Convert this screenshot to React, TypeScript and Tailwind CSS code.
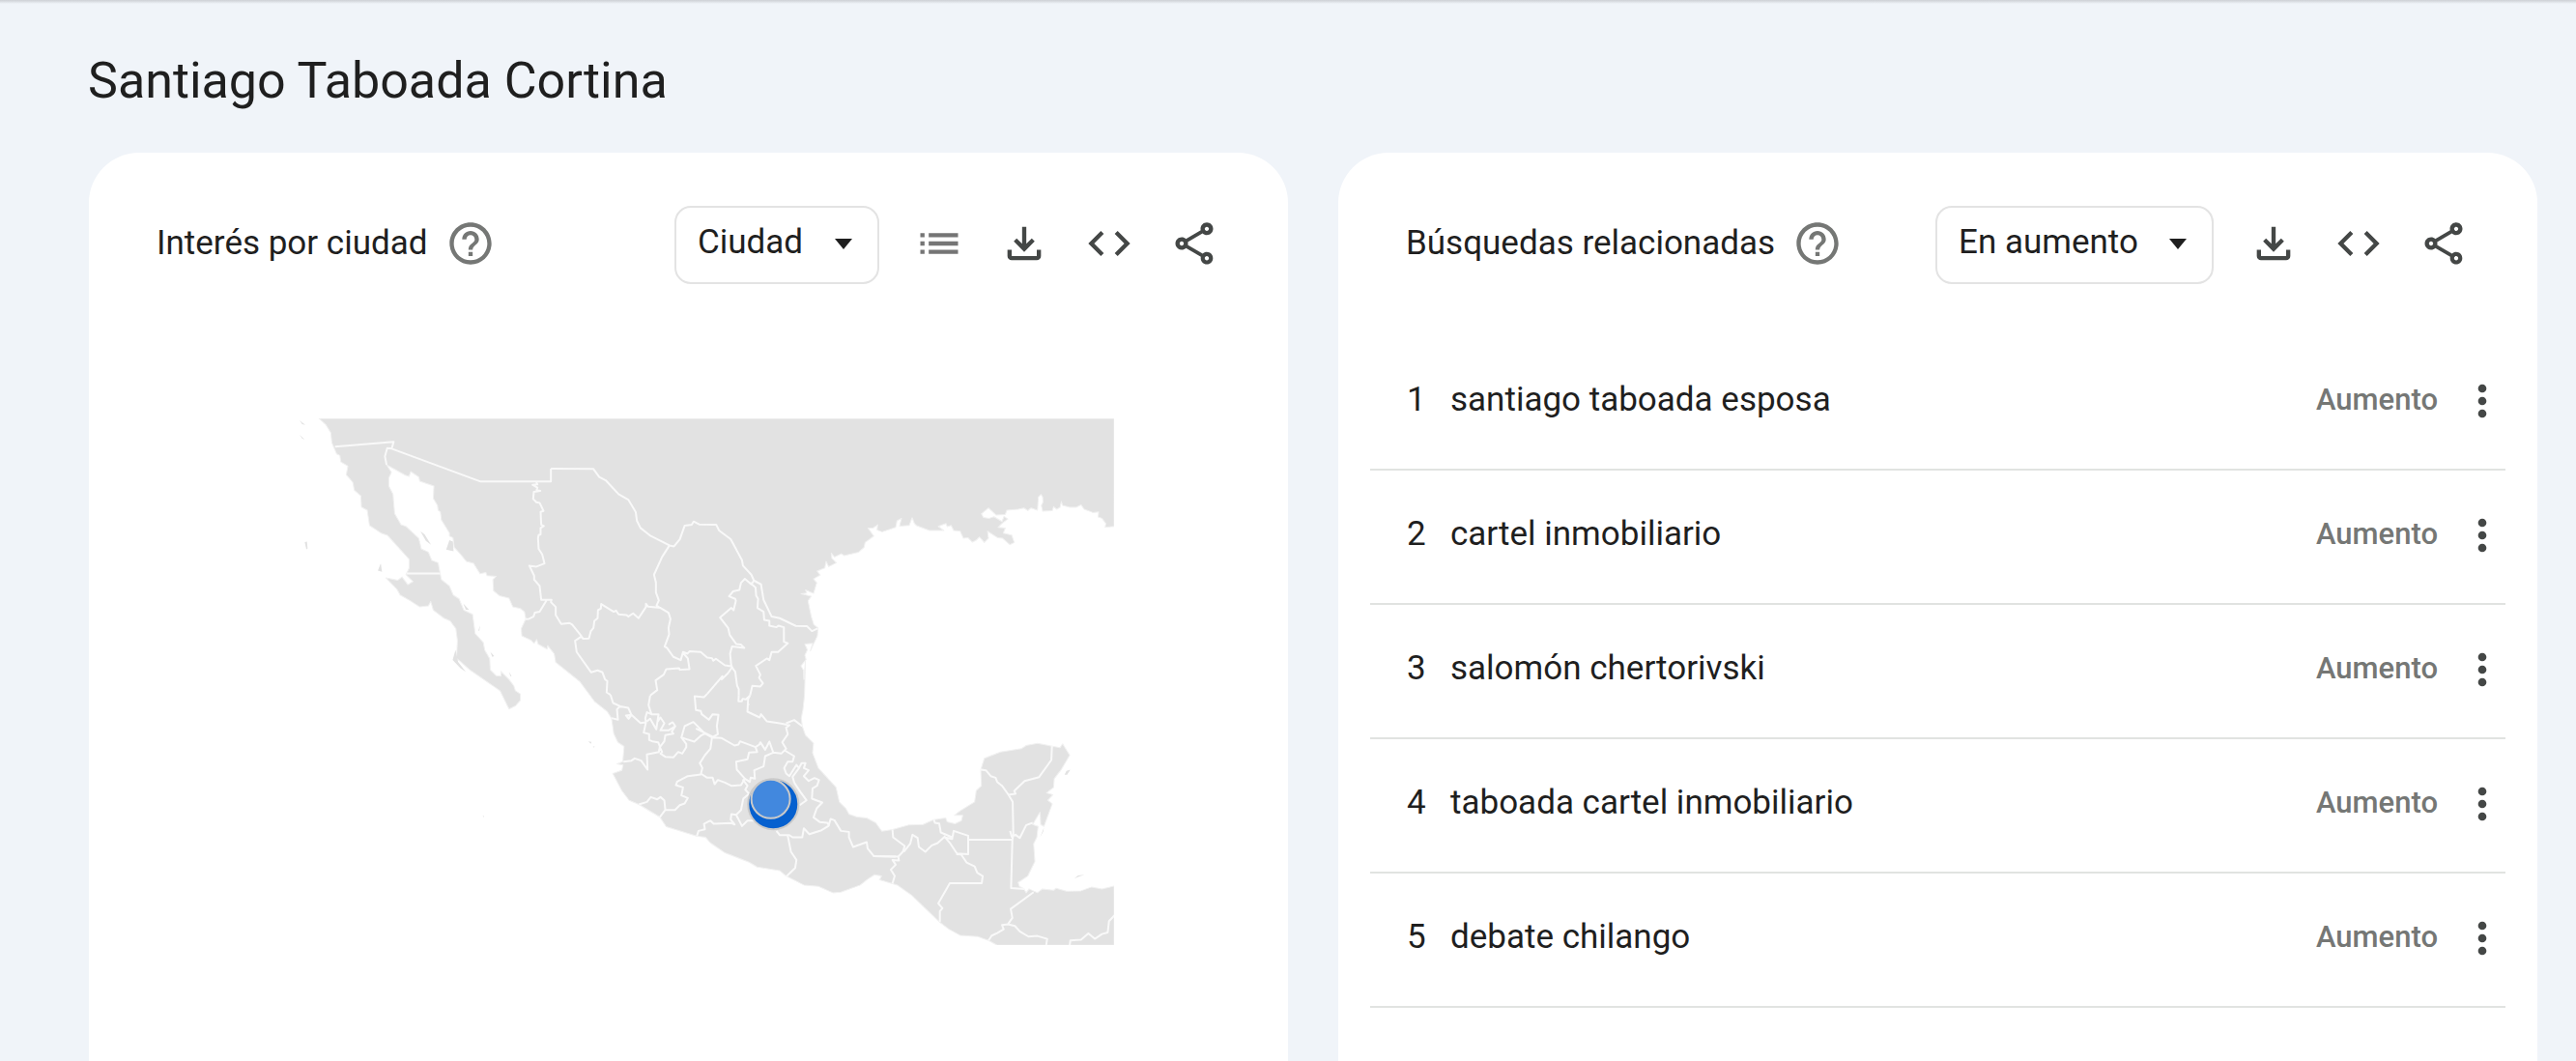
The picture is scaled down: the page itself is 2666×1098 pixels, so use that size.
import React from 'react';
import type { ReactNode } from 'react';
import { MdCode, MdHelpOutline, MdList, MdMoreVert, MdOutlineShare } from 'react-icons/md';

const LAND =
  'M90,40 L2558,40 L2558,375 L2530,378 L2532,366 L2520,350 L2508,346 L2510,330 L2492,332 L2465,322 L2455,308 L2440,316 L2420,316 L2398,310 L2394,298 L2390,316 L2380,322 L2370,314 L2366,326 L2336,328 L2332,310 L2337,300 L2336,284 L2331,276 L2323,284 L2320,325 L2300,318 L2290,326 L2278,318 L2260,322 L2225,325 L2220,338 L2192,340 L2168,318 L2146,336 L2152,347 L2170,350 L2185,345 L2210,360 L2216,344 L2228,352 L2210,366 L2198,378 L2220,380 L2214,396 L2240,402 L2248,425 L2234,432 L2212,412 L2196,410 L2165,390 L2168,412 L2155,425 L2140,408 L2130,418 L2118,424 L2104,410 L2090,412 L2080,390 L2060,388 L2052,372 L2040,376 L2036,366 L2012,375 L2030,388 L1985,388 L1945,373 L1938,366 L1931,348 L1922,372 L1892,374 L1898,350 L1884,358 L1880,378 L1838,392 L1822,386 L1824,370 L1810,380 L1794,380 L1812,405 L1785,425 L1782,440 L1765,455 L1720,466 L1712,460 L1690,470 L1680,458 L1682,474 L1696,488 L1672,500 L1664,484 L1660,504 L1636,514 L1646,526 L1625,538 L1635,550 L1625,583 L1600,572 L1604,582 L1586,584 L1618,592 L1608,606 L1618,655 L1626,680 L1639,690 L1637,715 L1615,762 L1622,738 L1598,740 L1606,758 L1598,775 L1602,788 L1586,808 L1594,822 L1595,850 L1600,790 L1597,900 L1592,945 L1587,970 L1590,995 L1600,1023 L1625,1048 L1622,1078 L1640,1125 L1695,1185 L1705,1230 L1725,1250 L1735,1268 L1760,1277 L1790,1280 L1818,1295 L1837,1321 L1870,1316 L1920,1302 L1965,1300 L1998,1285 L2035,1280 L2040,1292 L2064,1298 L2084,1288 L2088,1272 L2062,1272 L2080,1258 L2125,1230 L2130,1195 L2146,1180 L2144,1130 L2155,1095 L2205,1075 L2270,1065 L2285,1055 L2320,1048 L2370,1058 L2390,1062 L2398,1050 L2420,1085 L2395,1128 L2372,1158 L2370,1185 L2348,1202 L2368,1208 L2352,1225 L2366,1236 L2340,1306 L2330,1300 L2328,1262 L2305,1300 L2322,1306 L2318,1340 L2308,1360 L2312,1415 L2290,1460 L2260,1480 L2264,1492 L2278,1500 L2285,1512 L2294,1500 L2320,1512 L2335,1500 L2370,1504 L2378,1498 L2410,1507 L2455,1506 L2488,1494 L2520,1500 L2558,1491 L2558,1675 L2195,1675 L2168,1660 L2135,1648 L2080,1644 L2045,1625 L2015,1602 L1930,1520 L1885,1488 L1830,1472 L1836,1460 L1814,1456 L1790,1472 L1770,1488 L1710,1510 L1685,1512 L1640,1492 L1595,1488 L1540,1460 L1520,1443 L1450,1432 L1425,1417 L1350,1388 L1305,1357 L1290,1340 L1262,1336 L1168,1307 L1148,1277 L1083,1238 L1053,1225 L1030,1195 L1002,1142 L1030,1132 L1034,1116 L1015,1112 L1033,1105 L1037,1058 L1018,1045 L1005,1018 L998,970 L985,950 L945,918 L900,857 L825,797 L820,770 L800,745 L798,756 L770,740 L766,726 L758,738 L748,728 L720,715 L718,692 L732,662 L728,640 L715,630 L692,625 L680,598 L650,590 L632,575 L630,540 L640,530 L612,528 L608,518 L590,522 L570,490 L548,484 L530,462 L510,440 L506,410 L495,405 L495,395 L470,355 L467,330 L460,325 L458,310 L445,288 L447,250 L403,235 L400,222 L375,205 L370,220 L358,216 L300,184 L315,207 L307,225 L307,250 L320,275 L325,335 L345,370 L360,375 L400,412 L408,445 L430,455 L440,480 L460,488 L470,540 L495,560 L507,588 L525,600 L540,635 L567,648 L575,708 L600,735 L605,760 L620,785 L622,820 L640,838 L655,840 L655,825 L680,850 L695,870 L700,885 L715,895 L715,915 L700,932 L680,942 L652,885 L558,820 L530,795 L517,785 L520,730 L515,692 L497,668 L478,660 L445,635 L437,608 L430,622 L403,625 L372,605 L342,588 L332,570 L298,535 L335,542 L348,532 L366,556 L382,546 L360,525 L370,505 L370,477 L303,403 L285,397 L247,372 L240,325 L222,315 L220,280 L200,263 L195,238 L175,215 L180,188 L158,175 L155,155 L145,150 L130,115 L127,85 L112,60 Z';

const ISLANDS =
  'M30,46 L48,60 L38,58 Z M30,90 L46,106 L38,102 Z M46,424 L53,422 L55,444 L51,446 Z M273,512 L282,490 L286,516 Z M405,390 L418,400 L438,432 L422,420 Z M485,447 L495,418 L506,422 L508,452 Z M585,698 L590,682 L588,700 Z M622,764 L634,778 L628,780 Z M538,614 L556,634 L546,634 Z M505,790 L514,758 L522,796 L546,826 L530,816 Z M680,826 L688,840 L684,840 Z M598,1274 L603,1274 L602,1278 Z M926,1042 L936,1044 L934,1050 Z M940,1058 L946,1058 L944,1062 Z M2404,1146 L2410,1134 L2422,1130 L2412,1146 Z M2434,1468 L2446,1458 L2466,1456 L2450,1461 Z M2328,1340 L2340,1310 L2338,1322 Z';

const NORTHWEST_BORDERS =
  'M140,128 L322,113 L316,134 L592,236 L810,236 L810,196 M316,134 L302,132 L295,158 L300,184 M362,521 L466,521 M765,238 L768,245 L753,246 L768,255 L766,262 L777,265 L757,268 L755,290 L765,300 L775,302 L787,327 L778,330 L780,370 L788,374 L778,380 L778,400 L772,402 L770,412 L772,445 L783,462 L790,490 L765,500 L743,497 L758,528 L758,540 L775,560 L780,603 L812,603 L810,610 L825,625 L825,650 L842,678 L868,675 L876,680 L905,716 M796,605 L775,640 L760,643 L756,655 L742,662 L730,663';

const NORTH_BORDERS =
  'M90,196 L222,197 L240,222 L260,232 L300,275 L330,292 L353,330 L357,358 L368,380 L400,405 L458,434 L472,437 L490,415 L505,373 L527,370 L533,360 L550,369 L603,370 L612,388 L648,415 L683,480 L686,497 L712,525 L720,543 L742,555 L750,603 L775,655 L800,660 L850,684 L885,685 L900,700 L918,692 M458,434 L435,470 L410,525 L416,550 L416,580 L425,605 L418,620 L428,628 M185,716 L190,724 L208,723 L214,700 L222,690 L225,668 L235,660 L236,635 L245,630 L246,616 L285,640 L292,636 L300,648 L325,650 L330,655 L345,645 L362,660 L385,625 L385,615 L392,624 L430,628 L455,643 L461,662 L455,690 L457,710 L443,748 L450,752 L470,780 L493,790 L500,765 L514,770 L520,763 L555,765 L575,782 L590,784 L594,792 L602,786 L630,806 L654,810 M186,716 L165,730 L170,765 L215,828 L235,822 L250,828 L258,850 L265,855 L263,890 L275,898 M500,768 L515,785 L520,818 L490,820 L488,815 L448,818 L440,835 L415,853 L420,883 L398,900 M720,543 L712,555 L692,538 L680,550 L675,572 L655,577 L643,592 L662,600 L664,606 L657,635 L650,628 L615,658 L640,690 L645,712 L665,740 L680,742 L690,752 L652,748 L646,770 L650,810 L662,826 L668,870 L673,880 L673,900 M708,550 L725,565 L727,590 L733,600 L731,628 L750,640 L752,665 L768,668 L768,683 L790,688 L796,683 L813,688 L813,733 L825,738 L795,765 L775,765 L768,790 L760,785 L726,808 L740,835 L736,845 L748,862 L740,872 L715,870 L708,900 M654,810 L640,830 L620,850 L622,840 L575,895';

const CENTRAL_BORDERS =
  'M95,118 L103,143 L125,153 L115,163 L118,195 L98,190 M120,153 L150,158 L160,180 L151,192 L143,182 L160,180 L188,205 L205,203 M218,120 L213,150 L222,178 L208,172 L203,190 L205,203 L198,235 L215,240 L215,258 L225,262 L243,265 L248,278 L245,295 L208,303 L210,350 L190,322 L170,315 L160,322 L135,325 M222,178 L244,178 L237,225 L218,192 L208,200 M244,178 L242,200 L250,188 L262,206 L250,228 L275,228 L296,215 L288,203 L275,210 M296,215 L285,232 L290,238 L265,243 L262,262 L248,280 L255,295 L250,300 L265,310 L290,312 L305,295 L318,300 L330,280 L330,270 L315,250 L325,215 L352,202 L388,238 L375,245 L355,263 L330,255 L315,250 M388,238 L410,250 L405,285 L388,305 L372,330 L380,345 L375,365 L335,370 L302,387 L298,398 L320,405 L315,430 L335,438 L325,455 L310,460 L295,475 L265,475 L262,445 L250,435 L240,442 L220,435 L208,450 L183,458 M265,475 L248,497 M360,222 L412,248 M395,115 L385,125 L356,122 L360,165 L375,168 L378,178 L400,195 L412,178 L430,180 L425,215 L428,240 L410,250 M410,250 L440,252 L480,275 L492,272 L497,262 L545,280 L557,272 L560,265 L575,288 L588,263 L600,297 L625,300 L640,285 L628,265 L645,240 L640,220 L650,212 L620,206 L580,200 L562,178 L558,188 L520,170 L522,130 L528,120 M528,120 L515,132 L505,130 L502,138 L492,138 L493,120 M520,145 L525,150 M640,206 L665,196 L690,215 M375,362 L395,375 L412,375 L418,395 L428,382 L450,390 L470,400 L500,398 L512,378 L487,350 L485,325 L520,318 L525,297 L550,295 L545,280 M600,297 L575,308 L570,340 L541,352 L543,378 L530,375 L527,388 L512,378 M505,380 L520,400 L513,412 L525,425 L507,440 L500,475 L485,490 L470,488 L468,505 L480,520 L470,516 L415,518 L405,508 L385,518 L388,535 L368,540 L363,556 M485,490 L503,525 L520,508 L545,508 M635,290 L665,308 L660,325 L645,325 L634,345 L640,362 L650,370 L672,335 L680,345 L660,372 L665,390 M680,345 L688,330 L700,330 L695,345 L710,352 L695,370 L710,385 L728,376 L742,382 L736,400 L722,408 L720,440 L752,452 L735,470 L725,498 L745,513 L768,515 L774,525 M665,390 L685,420 L703,445 L682,460 M610,540 L620,553 L650,553 L660,560 L690,560 L695,532 L712,550 L750,538 L772,524 L778,503 L790,507 L810,540 L835,543 L835,560 L848,590 L890,575 L893,595 L912,618 L980,620 M645,555 L655,605 L672,630 L668,655 L640,682';

const SOUTH_BORDERS =
  'M190,416 L192,440 L228,467 L222,485 L208,500 L210,512 L190,510 L200,525 L185,540 L197,560 L190,583 M130,498 L208,500 M225,485 L245,460 L252,432 L268,442 L272,470 L292,485 L312,465 L330,458 L350,440 L375,445 L380,420 L425,435 L425,492 L390,490 L370,460 L350,436 M318,385 L322,395 L335,397 L340,425 L375,440 M425,447 L562,447 M464,230 L480,232 L495,250 L510,255 L515,268 L530,280 L550,308 L563,330 L565,430 L562,450 L558,597 L600,600 M550,308 L572,305 L568,296 L600,265 L645,253 L683,200 L685,157 M555,420 L560,438 L572,432 L585,442 L605,402 L625,395 M388,492 L403,493 L420,518 L445,530 L453,550 L470,560 L467,582 L368,582 L332,645 L345,660 L337,670 L337,702 M628,610 L557,662 L562,690 L548,710 L530,712 L535,725 L515,737 L498,745 L488,760 M548,710 L570,715 L585,732 L612,748 L640,746 L670,755 L667,775 M740,775 L742,760 L775,758 L798,738 L818,755 L840,740 L858,735 L862,700 L879,682';

function MexicoMap() {
  return (
    <svg viewBox="-84 40 2642 1635" className="mx-auto mt-[139px] w-[71%]" role="img" aria-label="Mapa de interés por ciudad en México">
      <path d={LAND} fill="#e2e2e2" stroke="#f1f1f1" strokeWidth="3" strokeLinejoin="round" />
      <path d={ISLANDS} fill="#e2e2e2" />
      <g fill="none" stroke="#f9f9f9" strokeWidth="6" strokeLinejoin="round">
        <path d={NORTHWEST_BORDERS} />
        <path d={NORTH_BORDERS} transform="translate(720 0)" />
        <path d={CENTRAL_BORDERS} transform="translate(900 780)" />
        <path d={SOUTH_BORDERS} transform="translate(1680 900)" />
      </g>
      <circle cx="1500" cy="1237" r="78" fill="#0560cf" stroke="#cacaca" strokeWidth="6" />
      <circle cx="1492" cy="1221" r="60" fill="#4288de" stroke="#cacaca" strokeWidth="6" />
    </svg>
  );
}

function DownloadIcon() {
  return (
    <svg viewBox="0 0 24 24" fill="currentColor" className="size-[52px]" aria-hidden="true">
      <path d="M12 16l-5-5 1.4-1.45 2.6 2.6V4h2v8.15l2.6-2.6L17 11zM6 20q-.825 0-1.412-.587T4 18v-3h2v3h12v-3h2v3q0 .825-.587 1.413T18 20z" />
    </svg>
  );
}

function IconButton({ label, className, children }: { label: string; className?: string; children: ReactNode }) {
  return (
    <button type="button" aria-label={label} title={label} className={className}>
      {children}
    </button>
  );
}

function Card({ title, option, extra, children }: { title: string; option: string; extra?: ReactNode; children: ReactNode }) {
  return (
    <section className="rounded-t-[52px] bg-white pt-[55px]">
      <header className="flex items-center justify-between pr-[71px] pl-[70px]">
        <div className="mb-1 flex items-center gap-[18px]">
          <h2 className="text-[35px] leading-[52px] whitespace-nowrap">{title}</h2>
          <IconButton label={`Ayuda: ${title}`} className="text-[#757775]">
            <MdHelpOutline className="size-[52px]" />
          </IconButton>
        </div>
        <div className="flex items-center gap-9 text-[#444746]">
          <div className="relative text-[#1f1f1f]">
            <select
              aria-label={`Filtro de ${title}`}
              className="h-[81px] appearance-none rounded-[17px] border-2 border-[#e3e3e3] bg-white pr-[76px] pb-1 pl-[22px] text-[35px]"
            >
              <option>{option}</option>
            </select>
            <svg viewBox="0 0 18 11" className="pointer-events-none absolute top-[34px] right-[28px] w-[18px]" aria-hidden="true">
              <path d="M0 0h18L9 11z" fill="currentColor" />
            </svg>
          </div>
          <div className="mb-1 flex items-center gap-9">
            {extra}
            <IconButton label="Descargar CSV">
              <DownloadIcon />
            </IconButton>
            <IconButton label="Insertar">
              <MdCode className="size-[52px]" />
            </IconButton>
            <IconButton label="Compartir">
              <MdOutlineShare className="size-[52px]" />
            </IconButton>
          </div>
        </div>
      </header>
      {children}
    </section>
  );
}

const QUERIES = [
  'santiago taboada esposa',
  'cartel inmobiliario',
  'salomón chertorivski',
  'taboada cartel inmobiliario',
  'debate chilango',
];

export default function App() {
  return (
    <main className="flex min-h-screen flex-col bg-[#f0f4f9] font-['Roboto',sans-serif] text-[#1f1f1f]">
      <div className="h-1 bg-linear-to-b from-[#cdd0d5] to-[#f0f4f9]" />
      <h1 className="pt-[50px] pb-11 pl-[91px] text-[52px] leading-[60px]">Santiago Taboada Cortina</h1>
      <div className="grid flex-1 grid-cols-2 gap-[52px] pr-10 pl-[92px]">
        <Card
          title="Interés por ciudad"
          option="Ciudad"
          extra={
            <IconButton label="Ver como lista" className="text-[#757575]">
              <MdList className="size-[52px]" />
            </IconButton>
          }
        >
          <MexicoMap />
        </Card>
        <Card title="Búsquedas relacionadas" option="En aumento">
          <ol className="mx-[33px] mt-[54px]">
            {QUERIES.map((query, i) => (
              <li key={query} className="flex h-[139px] items-center border-b-2 border-[#e1e3e1] pb-1 pl-[38px] text-[35px]">
                <span className="w-[45px]">{i + 1}</span>
                <a href="#" className="flex-1">{query}</a>
                <span className="mr-[22px] text-[31px] font-medium text-[#757775]">Aumento</span>
                <IconButton label={`Opciones de ${query}`} className="flex w-12 justify-center text-[#444746]">
                  <MdMoreVert className="size-[52px] shrink-0" />
                </IconButton>
              </li>
            ))}
          </ol>
        </Card>
      </div>
    </main>
  );
}
